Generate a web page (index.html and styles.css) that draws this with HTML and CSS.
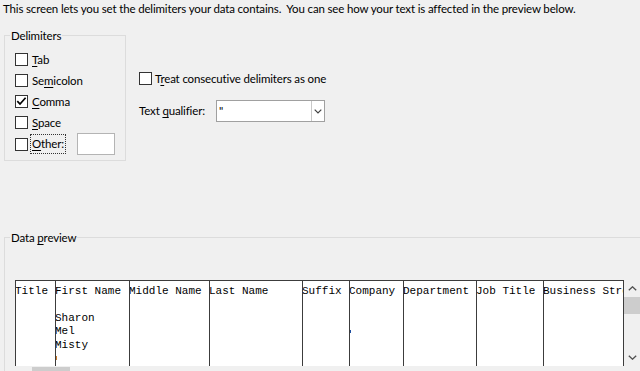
FILE: index.html
```html
<!DOCTYPE html>
<html lang="en">
<head>
<meta charset="utf-8">
<title>Text Import Wizard - Delimiters</title>
<link rel="stylesheet" href="styles.css">
</head>
<body>
<p class="intro">This screen lets you set the delimiters your data contains.&nbsp; You can see how your text is affected in the preview below.</p>

<div class="options">
  <fieldset class="group delims">
    <legend>Delimiters</legend>
    <div class="check-row"><span class="box"></span><span class="lbl"><u>T</u>ab</span></div>
    <div class="check-row"><span class="box"></span><span class="lbl">Se<u>m</u>icolon</span></div>
    <div class="check-row"><span class="box"><svg class="tick" viewBox="0 0 11 11" width="11" height="11"><path d="M1.3 5.2 L4 8 L9.6 1.8" fill="none" stroke="#000" stroke-width="1.7"/></svg></span><span class="lbl"><u>C</u>omma</span></div>
    <div class="check-row"><span class="box"></span><span class="lbl"><u>S</u>pace</span></div>
    <div class="check-row other-row"><span class="box"></span><span class="lbl focus"><u>O</u>ther:</span><span class="textbox"></span></div>
  </fieldset>

  <div class="side">
    <div class="check-row"><span class="box"></span><span class="lbl">T<u>r</u>eat consecutive delimiters as one</span></div>
    <div class="qual-row">
      <span class="qual-label">Text <u>q</u>ualifier:</span>
      <div class="select">
        <span class="sel-val">"</span>
        <span class="sel-btn"><svg viewBox="0 0 8 5" width="8" height="5"><path d="M0.7 0.7 L4 4 L7.3 0.7" fill="none" stroke="#404040" stroke-width="1.2"/></svg></span>
      </div>
    </div>
  </div>
</div>

<fieldset class="group preview-group">
  <legend>Data <u>p</u>review</legend>
  <div class="preview">
    <div class="preview-main">
      <div class="grid">
        <div class="col c1"><div class="ln">Title</div></div>
        <div class="col c2"><div class="ln">First Name</div><div class="ln"></div><div class="ln">Sharon</div><div class="ln">Mel</div><div class="ln">Misty</div><div class="ln"><span class="mark orange"></span></div></div>
        <div class="col c3"><div class="ln">Middle Name</div></div>
        <div class="col c4"><div class="ln">Last Name</div></div>
        <div class="col c5"><div class="ln">Suffix</div></div>
        <div class="col c6"><div class="ln">Company</div><div class="ln"></div><div class="ln"></div><div class="ln"><span class="mark blue"></span></div></div>
        <div class="col c7"><div class="ln">Department</div></div>
        <div class="col c8"><div class="ln">Job Title</div></div>
        <div class="col c9"><div class="ln">Business Street</div></div>
      </div>
      <div class="vscroll">
        <span class="sb-btn"><svg viewBox="0 0 9 5" width="9" height="5"><path d="M0.8 4.3 L4.5 0.8 L8.2 4.3" fill="none" stroke="#505050" stroke-width="1.3"/></svg></span>
        <span class="vthumb"></span>
        <span class="sb-track"></span>
        <span class="sb-btn"><svg viewBox="0 0 9 5" width="9" height="5"><path d="M0.8 0.7 L4.5 4.2 L8.2 0.7" fill="none" stroke="#505050" stroke-width="1.3"/></svg></span>
      </div>
    </div>
    <div class="hscroll"><span class="hthumb"></span></div>
  </div>
</fieldset>
</body>
</html>
```

FILE: styles.css
```css
html, body {
  margin: 0;
  padding: 0;
  overflow: hidden;
  background: #f0f0f0;
}

body {
  width: 640px;
  height: 371px;
  font-family: "Segoe UI", Lato, "Noto Sans", sans-serif;
  font-size: 11.5px;
  letter-spacing: -0.15px;
  line-height: 16px;
  color: #000;
}

u { text-decoration-thickness: 1px; text-underline-offset: 2px; }

.intro {
  margin: 0;
  padding: 1px 0 0 3px;
  white-space: nowrap;
}

.options {
  display: flex;
  align-items: flex-start;
  margin-top: 9px;
}

.group {
  margin: 0;
  border: 1px solid #dcdcdc;
  min-width: 0;
  box-sizing: border-box;
}

.group legend {
  padding: 2px 1px 0 1px;
  margin-left: -5px;
}

.delims {
  width: 122px;
  margin-left: 4px;
  padding: 5px 0 5px 10px;
}

.check-row {
  display: flex;
  align-items: center;
  height: 21px;
  white-space: nowrap;
}

.box {
  flex: none;
  display: flex;
  width: 13px;
  height: 13px;
  box-sizing: border-box;
  border: 1px solid #333;
  background: #fff;
  margin-right: 4px;
}

.other-row { height: 22px; }

.focus {
  outline: 1px dotted #333;
  outline-offset: 0;
  margin-left: -1px;
  padding: 0 1px 0 1px;
  line-height: 18px;
}

.textbox {
  flex: none;
  width: 38px;
  height: 22px;
  box-sizing: border-box;
  margin-left: 12px;
  background: #fff;
  border: 1px solid #b4b4b4;
}

.side {
  margin-left: 13px;
  margin-top: 42px;
}

.side .box { margin-right: 3px; }

.qual-row {
  display: flex;
  align-items: center;
  margin-top: 11px;
}

.qual-label { width: 77px; flex: none; }

.select {
  display: flex;
  width: 109px;
  height: 22px;
  box-sizing: border-box;
  border: 1px solid #a0a0a0;
  background: #fff;
}

.sel-val {
  flex: 1;
  padding-left: 2px;
  line-height: 20px;
}

.sel-btn {
  width: 12px;
  border-left: 1px solid #c8c8c8;
  display: flex;
  align-items: center;
  justify-content: center;
  background: #fff;
}

.preview-group {
  width: 700px;
  margin: 67px 0 0 4px;
  padding: 34px 0 0 10px;
}

.preview { width: 626px; }

.preview-main { display: flex; }

.grid {
  display: flex;
  height: 86px;
  box-sizing: border-box;
  border-top: 1px solid #3c3c3c;
  background: #fff;
  font-family: "Liberation Mono", "Courier New", monospace;
  font-size: 11px;
  letter-spacing: 0;
  line-height: 13.4px;
  color: #000;
}

.col {
  box-sizing: border-box;
  border-left: 1px solid #3c3c3c;
  padding-top: 4px;
  overflow: hidden;
  white-space: pre;
  flex: none;
}

.ln { height: 13.4px; margin-left: -1px; }

.c1 { width: 40px; }
.c2 { width: 74px; }
.c3 { width: 80px; }
.c4 { width: 93px; }
.c5 { width: 47px; }
.c6 { width: 54px; }
.c7 { width: 73px; }
.c8 { width: 67px; }
.c9 { width: 81px; border-right: 1px solid #3c3c3c; }

.mark {
  display: inline-block;
  width: 1px;
  vertical-align: middle;
}
.mark.orange { height: 4px; background: #c8782a; margin-left: 1px; }
.mark.blue { height: 3px; background: #1e4fa0; margin-left: 1px; }

.vscroll {
  display: flex;
  flex-direction: column;
  width: 17px;
  height: 86px;
  background: #f0f0f0;
}

.sb-btn {
  flex: none;
  height: 17px;
  display: flex;
  align-items: center;
  justify-content: center;
}

.vthumb {
  flex: none;
  height: 17px;
  background: #cdcdcd;
}

.sb-track { flex: 1; }

.hscroll {
  height: 17px;
  width: 609px;
  padding-left: 17px;
  box-sizing: border-box;
  background: #f0f0f0;
  display: flex;
}

.hthumb {
  width: 38px;
  height: 17px;
  margin-top: 1px;
  background: #cdcdcd;
}
```
